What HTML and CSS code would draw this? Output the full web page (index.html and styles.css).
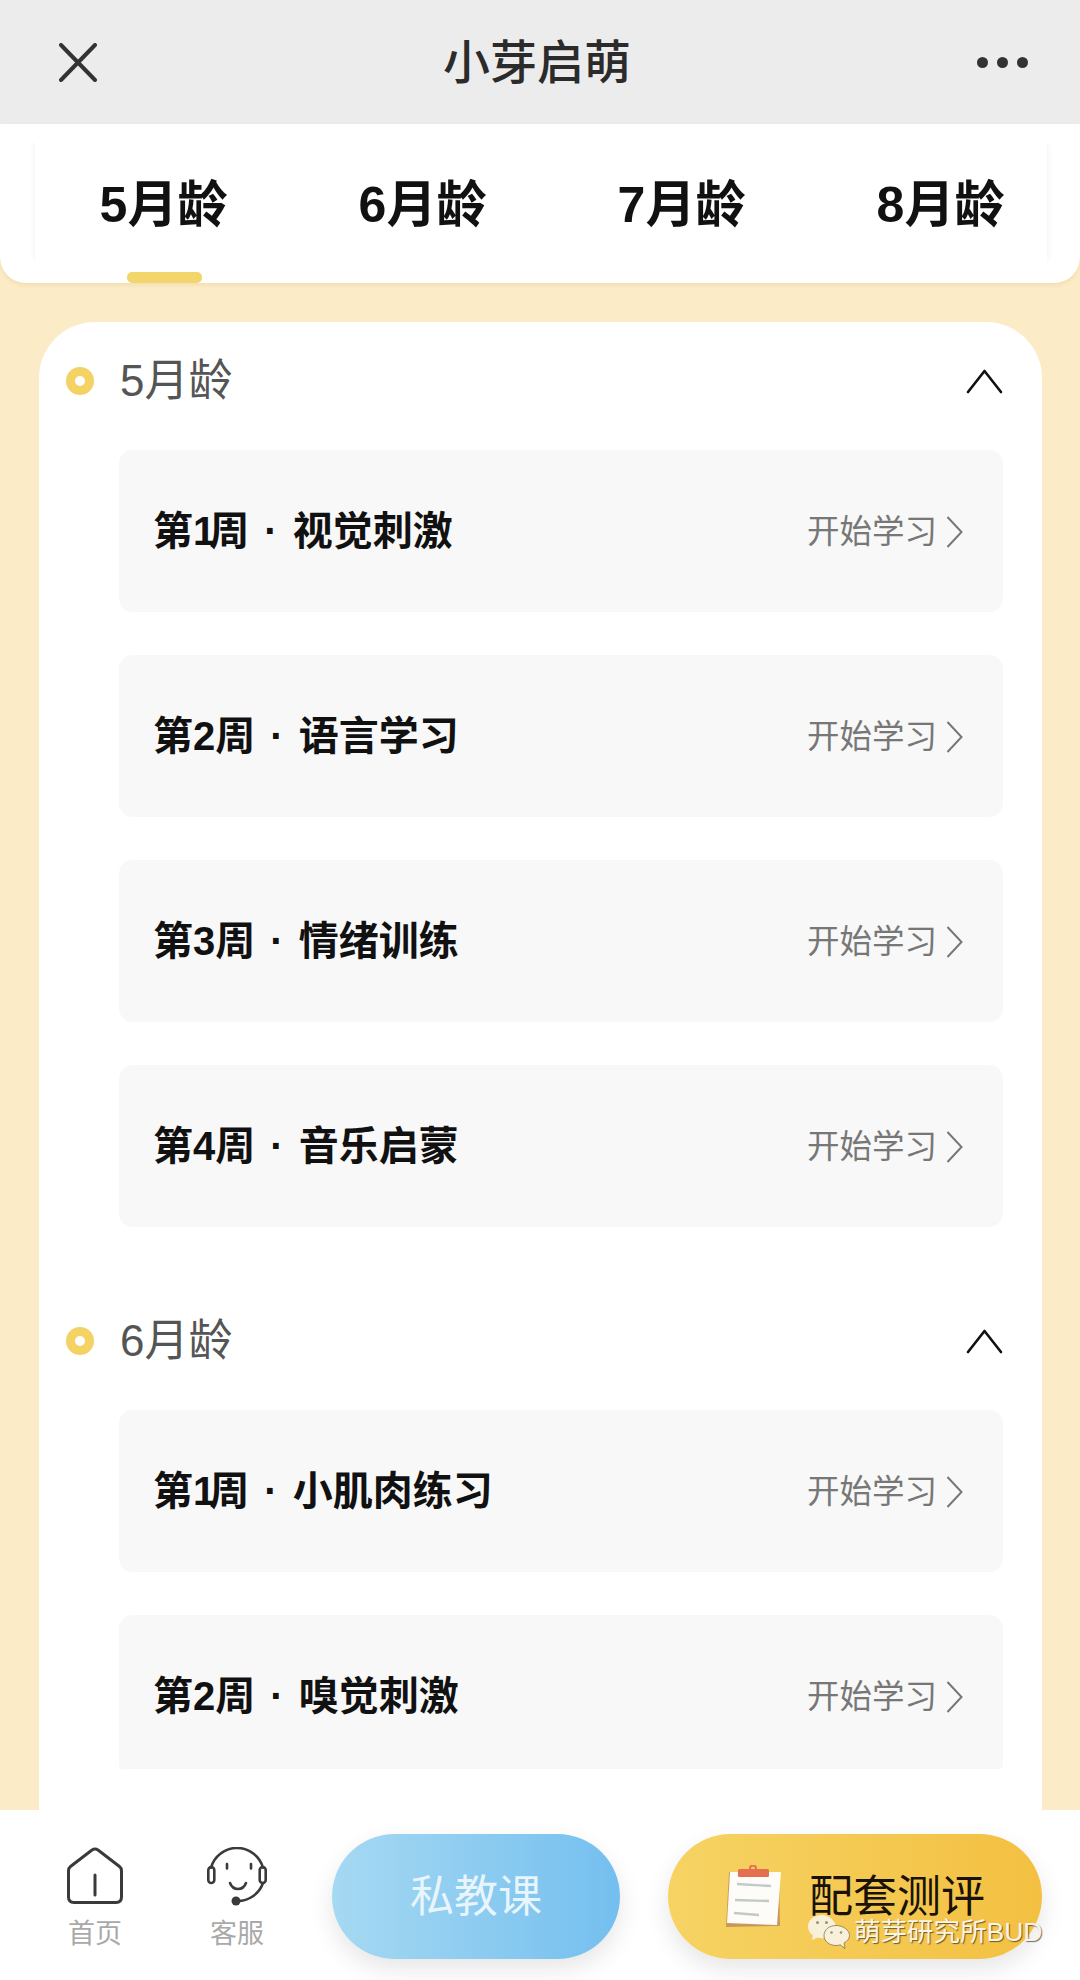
FILE: index.html
```html
<!DOCTYPE html>
<html lang="zh-CN">
<head>
    <meta charset="UTF-8">
    <meta name="viewport" content="width=device-width, initial-scale=1.0">
    <title>小芽启萌</title>
    <link rel="stylesheet" href="styles.css">
</head>
<body>
    <div class="page">
        <header class="header">
            <svg class="close" width="38" height="39" viewBox="0 0 38 39">
                <path d="M2 2 L36 37 M36 2 L2 37" fill="none" stroke="#333" stroke-width="4" stroke-linecap="round"/>
            </svg>
            <div class="title">小芽启萌</div>
            <div class="more"><i></i><i></i><i></i></div>
        </header>

        <nav class="tabs">
            <div class="tab active">5月龄</div>
            <div class="tab">6月龄</div>
            <div class="tab">7月龄</div>
            <div class="tab">8月龄</div>
        </nav>

        <main class="main">
            <div class="card">
                <div class="card-scroll">
                    <!-- 5月龄 -->
                    <section class="section">
                        <div class="section-head">
                            <span class="dot"></span>
                            <span class="section-name">5月龄</span>
                            <svg class="fold" width="37" height="26" viewBox="0 0 37 26">
                                <path d="M2 24 L18.5 3 L35 24" fill="none" stroke="#111" stroke-width="2.6" stroke-linecap="round" stroke-linejoin="round"/>
                            </svg>
                        </div>
                        <div class="row">
                            <span class="row-name">第<span class="one">1</span>周 · 视觉刺激</span>
                            <span class="row-go">开始学习<svg width="17" height="32" viewBox="0 0 17 32"><path d="M1.5 1 L15.5 16 L1.5 31" fill="none" stroke="#777" stroke-width="2"/></svg></span>
                        </div>
                        <div class="row">
                            <span class="row-name">第2周 · 语言学习</span>
                            <span class="row-go">开始学习<svg width="17" height="32" viewBox="0 0 17 32"><path d="M1.5 1 L15.5 16 L1.5 31" fill="none" stroke="#777" stroke-width="2"/></svg></span>
                        </div>
                        <div class="row">
                            <span class="row-name">第3周 · 情绪训练</span>
                            <span class="row-go">开始学习<svg width="17" height="32" viewBox="0 0 17 32"><path d="M1.5 1 L15.5 16 L1.5 31" fill="none" stroke="#777" stroke-width="2"/></svg></span>
                        </div>
                        <div class="row">
                            <span class="row-name">第4周 · 音乐启蒙</span>
                            <span class="row-go">开始学习<svg width="17" height="32" viewBox="0 0 17 32"><path d="M1.5 1 L15.5 16 L1.5 31" fill="none" stroke="#777" stroke-width="2"/></svg></span>
                        </div>
                    </section>

                    <!-- 6月龄 -->
                    <section class="section">
                        <div class="section-head">
                            <span class="dot"></span>
                            <span class="section-name">6月龄</span>
                            <svg class="fold" width="37" height="26" viewBox="0 0 37 26">
                                <path d="M2 24 L18.5 3 L35 24" fill="none" stroke="#111" stroke-width="2.6" stroke-linecap="round" stroke-linejoin="round"/>
                            </svg>
                        </div>
                        <div class="row">
                            <span class="row-name">第<span class="one">1</span>周 · 小肌肉练习</span>
                            <span class="row-go">开始学习<svg width="17" height="32" viewBox="0 0 17 32"><path d="M1.5 1 L15.5 16 L1.5 31" fill="none" stroke="#777" stroke-width="2"/></svg></span>
                        </div>
                        <div class="row">
                            <span class="row-name">第2周 · 嗅觉刺激</span>
                            <span class="row-go">开始学习<svg width="17" height="32" viewBox="0 0 17 32"><path d="M1.5 1 L15.5 16 L1.5 31" fill="none" stroke="#777" stroke-width="2"/></svg></span>
                        </div>
                    </section>
                </div>
            </div>
        </main>

        <footer class="bar">
            <div class="nav-item">
                <svg class="nav-icon" width="56" height="59" viewBox="0 0 56 59">
                    <path d="M3.5 19.5 Q1.5 21 1.5 24 V50 Q1.5 55.5 7 55.5 H49 Q54.5 55.5 54.5 50 V24 Q54.5 21 52.5 19.5 L31 3 Q28 1 25 3 Z" fill="none" stroke="#3a3a3a" stroke-width="3" stroke-linejoin="round"/>
                    <path d="M28 28 V48" fill="none" stroke="#3a3a3a" stroke-width="3" stroke-linecap="round"/>
                </svg>
                <span class="nav-label">首页</span>
            </div>
            <div class="nav-item">
                <svg class="nav-icon" width="60" height="59" viewBox="0 0 60 59">
                    <g fill="none" stroke="#3a3a3a" stroke-width="2.6" stroke-linecap="round">
                        <path d="M4 20.7 A27 27 0 0 1 56 20.7"/>
                        <rect x="1.3" y="20" width="6" height="16" rx="3"/>
                        <rect x="52.7" y="20" width="6" height="16" rx="3"/>
                        <path d="M20 17 V21.5 M44 17 V21.5"/>
                        <path d="M23 36 C26 44 36 44 39 36"/>
                        <path d="M56 36 A27 27 0 0 1 30 54"/>
                    </g>
                    <circle cx="29" cy="54" r="4.5" fill="#3a3a3a"/>
                </svg>
                <span class="nav-label">客服</span>
            </div>
            <div class="btn btn-blue"><span class="btn-text">私教课</span></div>
            <div class="btn btn-yellow">
                <svg class="clipboard" width="56" height="64" viewBox="0 0 56 64">
                    <path d="M4 7 H54 L55 61 L1 62 Z" fill="#c8985a"/>
                    <path d="M5 7 H56 L52 60 L2 58 Z" fill="#fdfcf8"/>
                    <rect x="13" y="4" width="31" height="8" rx="1.5" fill="#e4704f"/>
                    <circle cx="28" cy="3.5" r="3" fill="none" stroke="#e4704f" stroke-width="2"/>
                    <g fill="none" stroke="#c3c9c9" stroke-width="2.4">
                        <path d="M12 19 L46 21 M10 35 L44 36 M9 48 L34 50"/>
                    </g>
                </svg>
                <span class="btn-text">配套测评</span>
            </div>
            <div class="watermark">
                <svg width="42" height="36" viewBox="0 0 42 36">
                    <path d="M14 1 C6 1 0 6 0 12.5 C0 16.5 2 19.5 5 21.5 L4 26 L9.5 23.5 C11 24 13 24.5 15 24.3 L28 12 C26.5 6 20.5 1 14 1 Z" fill="#f7f1dc"/>
                    <path d="M28 11.5 C21 11.5 16 16 16 21.5 C16 27 21 31.5 28 31.5 C29.5 31.5 31 31.3 32.3 30.8 L37 34.5 L36 29 C39.5 27 41.5 24.5 41.5 21.5 C41.5 16 35 11.5 28 11.5 Z" fill="#f7f1dc" stroke="#8a7440" stroke-width="0.8"/>
                    <circle cx="9.5" cy="8.5" r="1.5" fill="#9a9270"/>
                    <circle cx="18.5" cy="8.5" r="1.5" fill="#9a9270"/>
                    <circle cx="23.5" cy="18.5" r="1.3" fill="#9a9270"/>
                    <circle cx="33" cy="18.5" r="1.3" fill="#9a9270"/>
                </svg>
                <span class="watermark-text">萌芽研究所BUD</span>
            </div>
        </footer>
    </div>
</body>
</html>
```

FILE: styles.css
```css
* {
    box-sizing: border-box;
}

body {
    margin: 0;
    font-family: "Liberation Sans", "Noto Sans CJK SC", sans-serif;
    background-color: #fff;
}

.page {
    display: flex;
    flex-direction: column;
    width: 1080px;
    height: 1980px;
    overflow: hidden;
    position: relative;
    background-color: #fbebc6;
}

/* header */
.header {
    display: grid;
    grid-template-columns: 384px 1fr auto;
    align-items: center;
    flex: 0 0 124px;
    padding: 0 52px 0 59px;
    background-color: #ececec;
}

.title {
    font-size: 47px;
    font-weight: 500;
    line-height: 1;
    color: #2b2b2b;
}

.more {
    display: flex;
    gap: 9px;
}

.more i {
    width: 11px;
    height: 11px;
    border-radius: 50%;
    background-color: #333;
}

/* tabs */
.tabs {
    display: flex;
    flex: 0 0 159px;
    align-items: center;
    padding-left: 34px;
    position: relative;
    overflow: hidden;
    background-color: #fff;
    border-radius: 0 0 26px 26px;
    box-shadow: 0 2px 4px rgba(200, 170, 100, 0.2);
    z-index: 1;
}

.tabs::before {
    content: "";
    position: absolute;
    top: 16px;
    bottom: 20px;
    left: 35px;
    right: 33px;
    box-shadow: -4px 0 6px -3px rgba(0, 0, 0, 0.05), 4px 0 6px -3px rgba(0, 0, 0, 0.05);
}

.tab {
    flex: 0 0 259px;
    text-align: center;
    font-size: 50px;
    font-weight: 700;
    line-height: 1;
    color: #111;
    position: relative;
    height: 100%;
    padding-top: 3px;
    display: flex;
    align-items: center;
    justify-content: center;
}

.tab.active::after {
    content: "";
    position: absolute;
    left: 93px;
    bottom: 0;
    width: 75px;
    height: 11px;
    border-radius: 5px;
    background-color: #f2d56b;
}

/* list card */
.main {
    flex: 1;
    min-height: 0;
    padding: 39px 38px 0 39px;
}

.card {
    height: 100%;
    padding-bottom: 41px;
    background-color: #fff;
    border-radius: 56px 56px 0 0;
}

.card-scroll {
    height: 100%;
    overflow: hidden;
}

.section {
    padding: 0 39px 0 27px;
    margin-bottom: 55px;
}

.section-head {
    display: flex;
    align-items: center;
    height: 118px;
    margin-bottom: 10px;
}

.dot {
    width: 28px;
    height: 28px;
    border: 9px solid #f4d264;
    border-radius: 50%;
    margin-right: 26px;
}

.section-name {
    flex: 1;
    font-size: 44px;
    line-height: 1;
    color: #555;
}

.row {
    display: flex;
    align-items: center;
    justify-content: space-between;
    height: 162px;
    margin-left: 53px;
    margin-bottom: 43px;
    padding: 0 40px 0 34px;
    background-color: #f8f8f8;
    border-radius: 14px;
}

.row:last-child {
    margin-bottom: 0;
}

.row-name {
    font-size: 40px;
    font-weight: 700;
    line-height: 1;
    word-spacing: 4px;
    color: #111;
}

/* the 1 is narrower in the original font */
.one {
    letter-spacing: -6px;
}

.row-go {
    display: flex;
    align-items: center;
    gap: 9px;
    padding-top: 2px;
    font-size: 32.5px;
    line-height: 1;
    color: #777;
}

/* bottom bar */
.bar {
    display: flex;
    flex: 0 0 170px;
    align-items: flex-start;
    padding: 24px 38px 0 45px;
    position: relative;
    background-color: #fff;
}

.nav-item {
    display: flex;
    flex-direction: column;
    align-items: center;
    width: 100px;
    margin-right: 42px;
    padding-top: 13px;
}

.nav-icon {
    display: block;
}

.nav-label {
    margin-top: 12px;
    font-size: 27px;
    line-height: 1.2;
    color: #a9a9a9;
}

.btn {
    display: flex;
    align-items: center;
    justify-content: center;
    height: 125px;
    border-radius: 63px;
    box-shadow: 0 10px 24px rgba(0, 0, 0, 0.1);
}

.btn-blue {
    width: 288px;
    margin: 0 48px 0 3px;
    color: #e8f5fc;
    background: linear-gradient(90deg, #a6d9f2, #74bfef);
}

.btn-yellow {
    width: 374px;
    gap: 28px;
    color: #1a1206;
    background: linear-gradient(90deg, #f6d364, #f3c041);
}

.btn-text {
    padding-bottom: 8px;
    font-size: 44px;
}

.watermark {
    display: flex;
    align-items: center;
    gap: 4px;
    position: absolute;
    left: 808px;
    top: 104px;
}

.watermark-text {
    font-size: 26.5px;
    line-height: 1;
    color: #f8f4e6;
    text-shadow: 1px 1px 1px rgba(0, 0, 0, 0.55);
    white-space: nowrap;
}
```
